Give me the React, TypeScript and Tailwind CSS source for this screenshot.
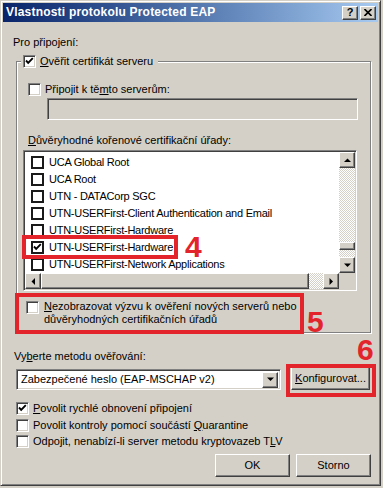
import React from 'react';

const raised =
  'border border-t-white border-l-white border-r-[#404040] border-b-[#404040] shadow-[inset_-1px_-1px_0_#808080,inset_1px_1px_0_#d4d0c8]';
const sunken =
  'border border-t-[#808080] border-l-[#808080] border-r-white border-b-white shadow-[inset_1px_1px_0_#404040,inset_-1px_-1px_0_#d4d0c8]';
const hatch = 'bg-[repeating-conic-gradient(#d4d0c8_0_25%,#ffffff_0_50%)] bg-[length:2px_2px]';

const Tick = () => (
  <svg width="9" height="9" viewBox="0 0 9 9" className="block">
    <path d="M1 3.5 L3.2 5.8 L7.8 1.2" fill="none" stroke="#000" strokeWidth="1.9" />
  </svg>
);

const Check = ({ checked = false }: { checked?: boolean }) => (
  <div className={`w-[13px] h-[13px] shrink-0 bg-white flex items-center justify-center ${sunken}`}>
    {checked && <Tick />}
  </div>
);

const ListCheck = ({ checked = false }: { checked?: boolean }) => (
  <div className="w-[13px] h-[13px] shrink-0 bg-white border-2 border-[#1a1a1a] flex items-center justify-center">
    {checked && <Tick />}
  </div>
);

const Arrow = ({ dir }: { dir: 'up' | 'down' | 'left' | 'right' }) => {
  const pts = {
    up: '0,4 7,4 3.5,0.5',
    down: '0,0.5 7,0.5 3.5,4',
    left: '4,0 4,7 0.5,3.5',
    right: '0.5,0 0.5,7 4,3.5',
  }[dir];
  const vertical = dir === 'up' || dir === 'down';
  return (
    <svg width={vertical ? 7 : 5} height={vertical ? 5 : 7} viewBox={vertical ? '0 0 7 5' : '0 0 5 7'}>
      <polygon points={pts} fill="#000" />
    </svg>
  );
};

const ScrollBtn = ({ dir }: { dir: 'up' | 'down' | 'left' | 'right' }) => (
  <div className={`w-[16px] h-[16px] shrink-0 bg-[#d4d0c8] flex items-center justify-center ${raised}`}>
    <Arrow dir={dir} />
  </div>
);

const certs: { name: string; checked?: boolean }[] = [
  { name: 'UCA Global Root' },
  { name: 'UCA Root' },
  { name: 'UTN - DATACorp SGC' },
  { name: 'UTN-USERFirst-Client Authentication and Email' },
  { name: 'UTN-USERFirst-Hardware' },
  { name: 'UTN-USERFirst-Hardware', checked: true },
  { name: 'UTN-USERFirst-Network Applications' },
];

export default function App() {
  return (
    <div className="w-[383px] h-[488px] bg-[#d4d0c8] font-['Liberation_Sans',Arial,sans-serif] text-[11px] leading-[13px] text-black">
      <div className="relative w-[381px] h-[486px] p-[2px] bg-[#d4d0c8] border border-t-[#d4d0c8] border-l-[#d4d0c8] border-r-[#404040] border-b-[#404040] shadow-[inset_1px_1px_0_#fff,inset_-1px_-1px_0_#808080]">
        {/* title bar */}
        <div className="h-[19px] flex items-center bg-gradient-to-r from-[#0a246a] to-[#a6caf0] pl-[3px] pr-[2px]">
          <span className="flex-1 text-white font-bold text-[12px] tracking-[0.2px]">Vlastnosti protokolu Protected EAP</span>
          <div className={`w-[16px] h-[14px] bg-[#d4d0c8] flex items-center justify-center font-bold text-[11px] leading-none ${raised}`}>?</div>
          <div className={`ml-[2px] w-[16px] h-[14px] bg-[#d4d0c8] flex items-center justify-center ${raised}`}>
            <svg width="8" height="7" viewBox="0 0 8 7">
              <path d="M0.5 0 L7.5 7 M7.5 0 L0.5 7" stroke="#000" strokeWidth="1.6" />
            </svg>
          </div>
        </div>

        <div className="ml-[10px] mt-[14px]">Pro připojení:</div>

        <fieldset className="ml-[13px] mt-[6px] w-[355px] pl-[4px] pb-[6px] border border-[#808080] shadow-[inset_1px_1px_0_#fff,1px_1px_0_#fff]">
          <legend className="pl-[2px] pr-[5px] bg-[#d4d0c8]">
            <div className="flex items-center gap-[4px]">
              <Check checked />
              <span>
                <span className="underline">O</span>věřit certifikát serveru
              </span>
            </div>
          </legend>

          <div className="ml-[7px] mt-[15px] flex items-center gap-[4px]">
            <Check />
            <span>
              Připojit k tě<span className="underline">m</span>to serverům:
            </span>
          </div>
          <div className={`ml-[26px] mt-[2px] w-[311px] h-[22px] bg-[#d4d0c8] ${sunken}`} />

          <div className="ml-[7px] mt-[14px]">
            <span className="underline">D</span>ůvěryhodné kořenové certifikační úřady:
          </div>

          <div className={`ml-[2px] mt-[3px] w-[334px] h-[141px] bg-white flex flex-col ${sunken} p-px`}>
            <div className="flex flex-1 min-h-0">
              <div className="flex-1 overflow-hidden pt-[2px]">
                {certs.map((c, i) => (
                  <div key={i} className="h-[17px] flex items-center pl-[6px] gap-[5px] whitespace-nowrap">
                    <ListCheck checked={c.checked} />
                    <span className="tracking-[-0.25px]">{c.name}</span>
                  </div>
                ))}
              </div>
              <div className="w-[16px] flex flex-col">
                <ScrollBtn dir="up" />
                <div className={`flex-1 ${hatch}`} />
                <div className={`h-[8px] bg-[#d4d0c8] ${raised}`} />
                <div className={`h-[7px] ${hatch}`} />
                <ScrollBtn dir="down" />
              </div>
            </div>
            <div className="h-[16px] flex">
              <ScrollBtn dir="left" />
              <div className={`w-[268px] bg-[#d4d0c8] ${raised}`} />
              <div className={`flex-1 ${hatch}`} />
              <ScrollBtn dir="right" />
              <div className="w-[16px] bg-[#d4d0c8]" />
            </div>
          </div>

          <div className="ml-[5px] mt-[9px] flex items-start gap-[5px]">
            <div className="mt-[1px]">
              <Check />
            </div>
            <span>
              <span className="underline">N</span>ezobrazovat výzvu k ověření nových serverů nebo
              <br />
              důvěryhodných certifikačních úřadů
            </span>
          </div>
        </fieldset>

        <div className="ml-[11px] mt-[17px]">
          Vy<span className="underline">b</span>erte metodu ověřování:
        </div>

        <div className="mt-[4px] flex items-start">
          <div className={`ml-[13px] mt-[2px] w-[265px] h-[21px] bg-white flex items-center ${sunken} p-[2px]`}>
            <span className="flex-1 pl-[2px]">Zabezpečené heslo (EAP-MSCHAP v2)</span>
            <ScrollBtn dir="down" />
          </div>
          <div className={`ml-[10px] w-[79px] h-[23px] bg-[#d4d0c8] flex items-center justify-center ${raised}`}>
            <span>
              <span className="underline">K</span>onfigurovat...
            </span>
          </div>
        </div>

        <div className="ml-[13px] mt-[12px] flex flex-col">
          <div className="h-[17px] flex items-start gap-[4px]">
            <Check checked />
            <span>
              <span className="underline">P</span>ovolit rychlé obnovení připojení
            </span>
          </div>
          <div className="h-[16px] flex items-start gap-[4px]">
            <Check />
            <span>
              Povolit kontroly pomocí součástí <span className="underline">Q</span>uarantine
            </span>
          </div>
          <div className="h-[16px] flex items-start gap-[4px]">
            <Check />
            <span>
              Odpojit, nenabízí-li server metodu kryptovazeb T<span className="underline">L</span>V
            </span>
          </div>
        </div>

        <div className="mt-[3px] flex justify-end gap-[6px] pr-[7px]">
          <div className={`w-[75px] h-[23px] bg-[#d4d0c8] flex items-center justify-center ${raised}`}>OK</div>
          <div className={`w-[75px] h-[23px] bg-[#d4d0c8] flex items-center justify-center ${raised}`}>Storno</div>
        </div>

        {/* annotations */}
        <div className="absolute left-[21px] top-[234px] w-[156px] h-[24px] border-[4px] border-[#e3242b]" />
        <div className="absolute left-[184px] top-[235px] text-[30px] leading-[22px] font-bold text-[#e3242b]">4</div>
        <div className="absolute left-[14px] top-[292px] w-[289px] h-[41px] border-[4px] border-[#e3242b]" />
        <div className="absolute left-[306px] top-[310px] text-[30px] leading-[22px] font-bold text-[#e3242b]">5</div>
        <div className="absolute left-[285px] top-[363px] w-[90px] h-[33px] border-[4px] border-[#e3242b]" />
        <div className="absolute left-[356px] top-[338px] text-[30px] leading-[22px] font-bold text-[#e3242b]">6</div>
      </div>
    </div>
  );
}
